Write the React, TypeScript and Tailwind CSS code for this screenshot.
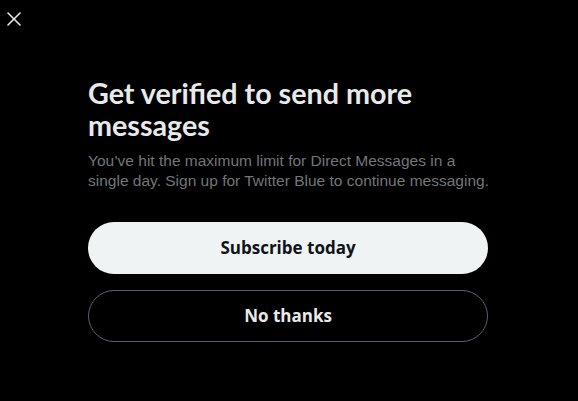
import { X } from 'lucide-react'

export default function App() {
  return (
    <div className="w-[578px] h-[401px] bg-black text-[#e7e9ea] font-['Lato',sans-serif] overflow-hidden">
      <div className="h-[40px] flex items-start pt-[7px] pl-[2px]">
        <button className="w-[24px] h-[24px] flex items-center justify-center text-[#e7e9ea]">
          <X size={24} strokeWidth={1.6} />
        </button>
      </div>
      <div className="w-[400px] ml-[88px] pt-[37px]">
        <h1 className="text-[28.7px] leading-[32px] font-bold">
          Get verified to send more messages
        </h1>
        <p className="w-[410px] mt-[10px] text-[15.5px] leading-[20px] text-[#71767b] font-['Liberation_Sans',sans-serif]">
          You’ve hit the maximum limit for Direct Messages in a single day. Sign up for Twitter Blue to continue messaging.
        </p>
        <div className="mt-[31px] flex flex-col gap-[16px] font-['Open_Sans',sans-serif]">
          <button className="h-[52px] rounded-full bg-[#eff3f4] text-[#0f1419] text-[17px] font-bold">
            Subscribe today
          </button>
          <button className="h-[52px] rounded-full border border-[#536471] text-[#e7e9ea] text-[17px] font-bold">
            No thanks
          </button>
        </div>
      </div>
    </div>
  )
}
